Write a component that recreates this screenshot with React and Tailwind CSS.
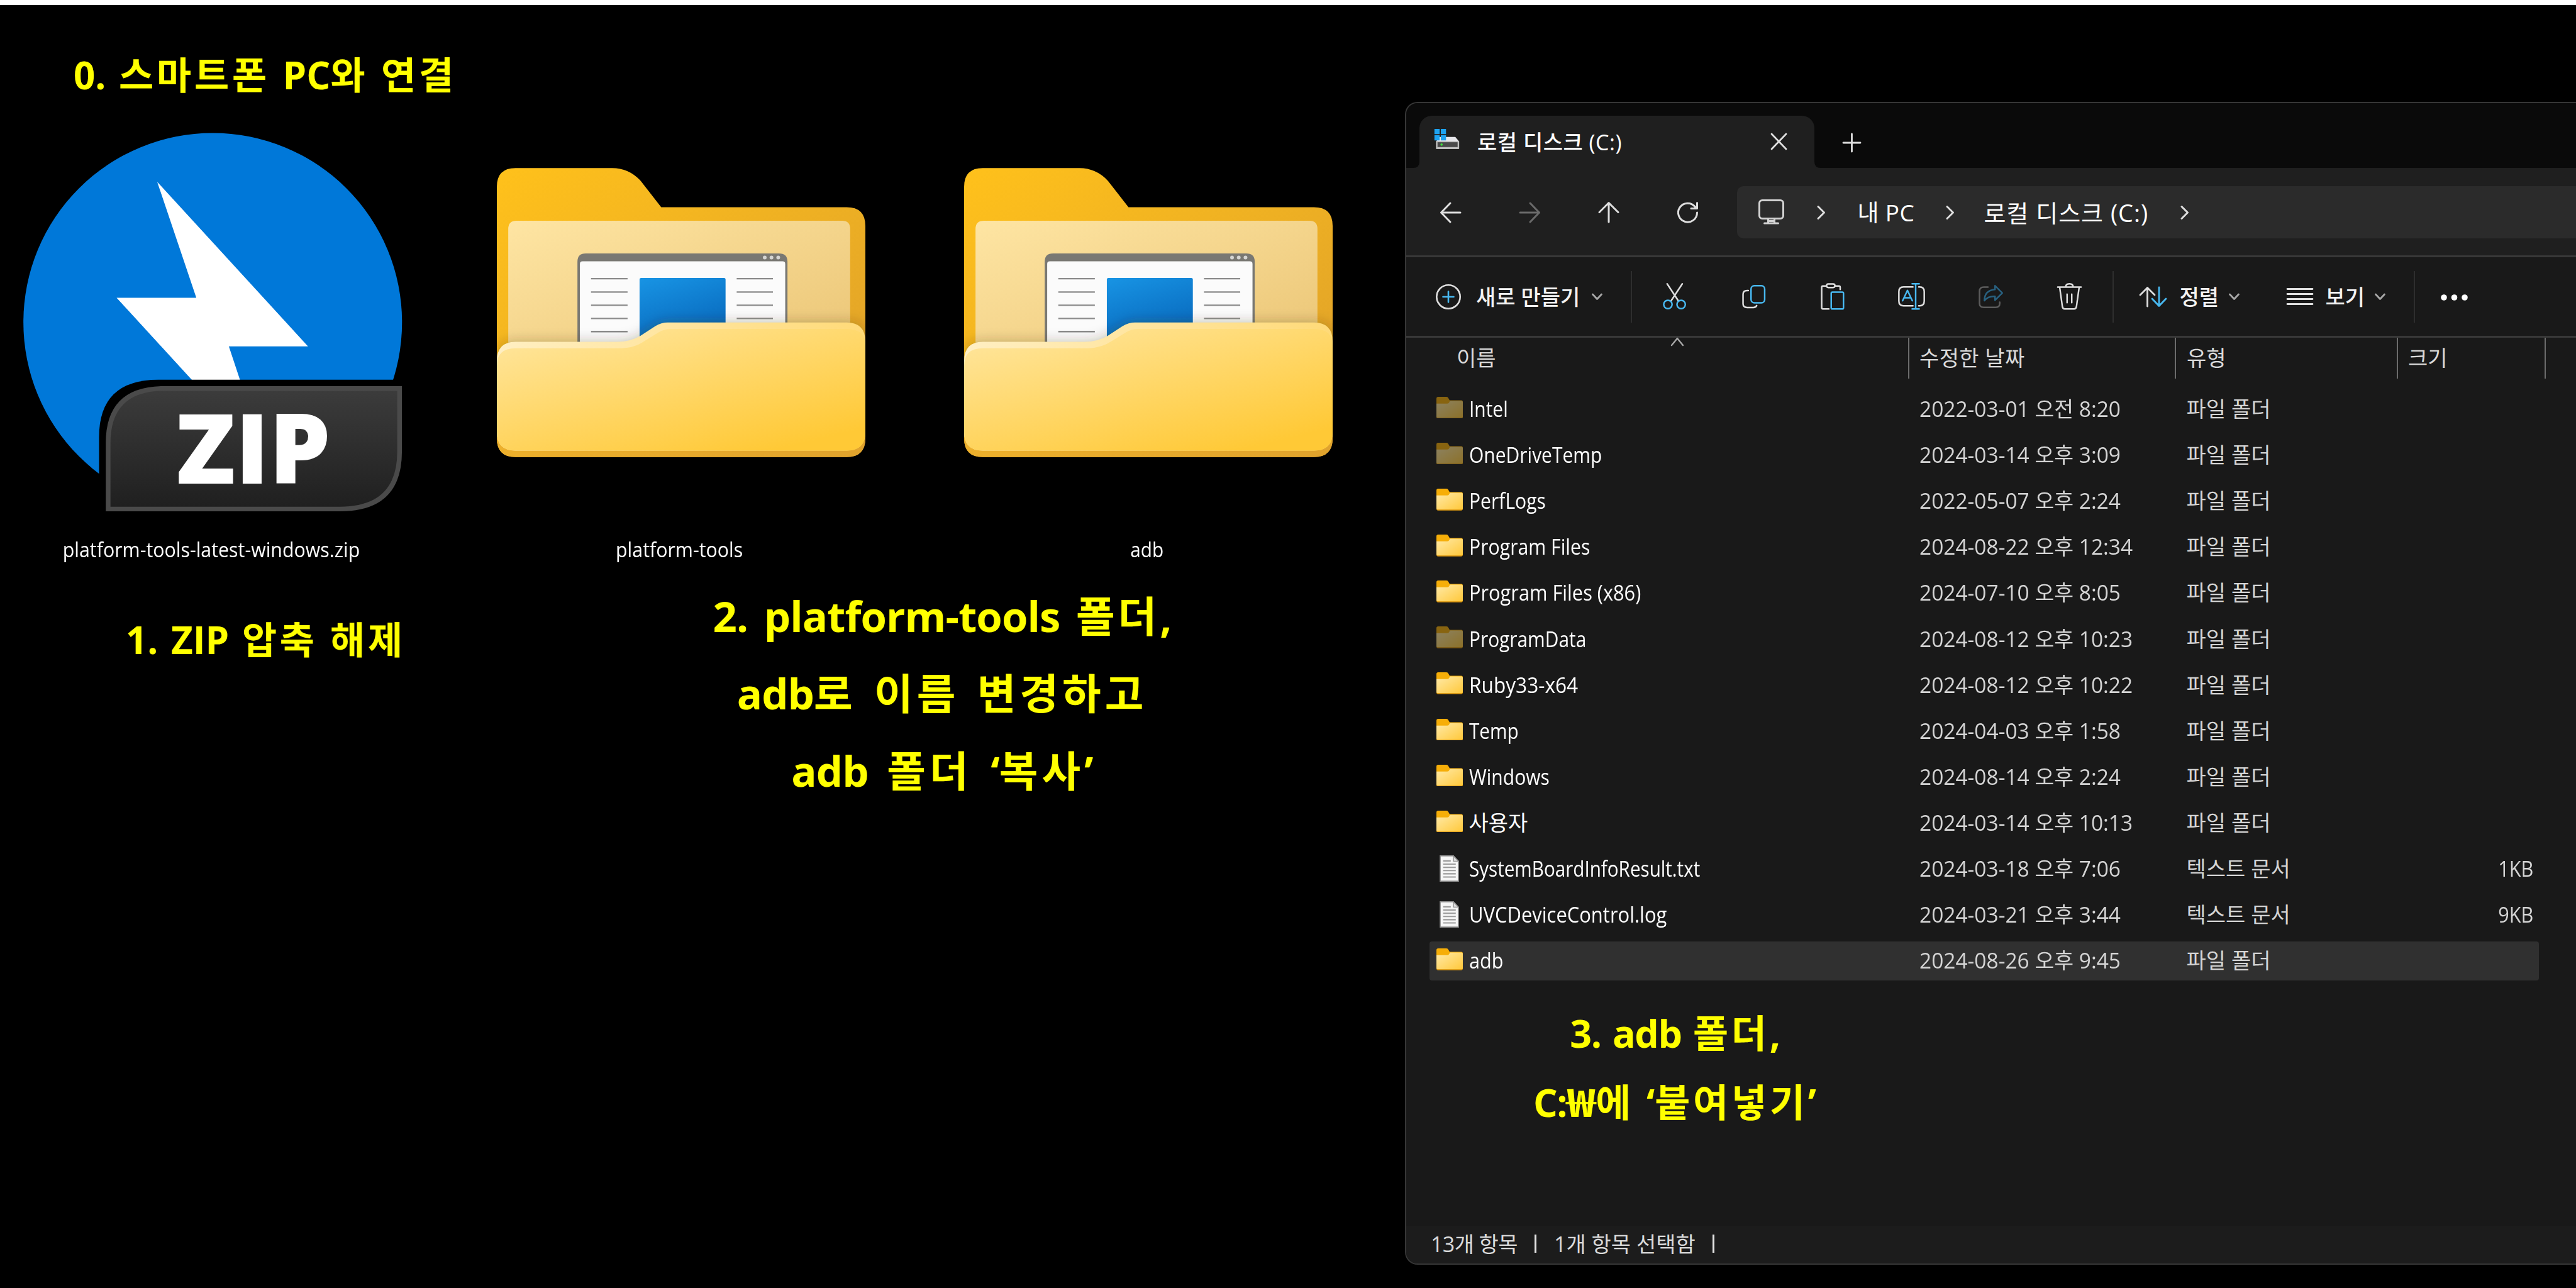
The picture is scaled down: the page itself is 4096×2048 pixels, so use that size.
const SANS = "font-['Open_Sans','Noto_Sans_CJK_KR',sans-serif]";

/* Splits text into Hangul and Latin runs so each script gets its own tracking. */
function Mixed({ text, ko, latin = "" }) {
  return text.split(/([\uAC00-\uD7A3]+)/).filter(Boolean).map((run, i) => (
    <span key={i} className={/[\uAC00-\uD7A3]/.test(run) ? ko : latin}>{run}</span>
  ));
}

function ZipIcon() {
  return (
    <svg viewBox="39 227 648 648" className="h-[603px] w-[603px]">
      <defs>
        <linearGradient id="badge" x1="0" y1="0" x2="0" y2="1">
          <stop offset="0" stopColor="#3c3c3c" />
          <stop offset="1" stopColor="#1f1f1f" />
        </linearGradient>
      </defs>
      <circle cx="362.7" cy="551" r="323.5" fill="#0078d9" />
      <path d="M267.9 311 525.5 592H390.3L456 790 198.5 509H334.7Z" fill="#fff" />
      <path d="M168.5 876V747Q168.5 649 270 649H700V876Z" fill="#000" />
      <path d="M184 870V757Q184 664 280 664H682V772Q682 870 580 870Z" fill="url(#badge)" stroke="#4a4a4a" strokeWidth="8" />
      <text x="300" y="826.5" fill="#fff" fontFamily="Open Sans" fontWeight="800" fontSize="166.5" textLength="264">ZIP</text>
    </svg>
  );
}

const FOLDER_BACK = "M0 32Q0 0 32 0H197Q226 0 246 22L281 67H598Q630 67 630 99V462Q630 494 598 494H32Q0 494 0 462Z";
const FOLDER_FRONT = "M0 330Q0 297 32 297H206Q228 297 245 287L271 270Q281 264 292 264H598Q630 264 630 297V451Q630 483 598 483H32Q0 483 0 451Z";

function BigFolder({ id }) {
  return (
    <svg viewBox="0 0 630 494" className="mt-[56px] h-[460px] w-[586px]">
      <defs>
        <linearGradient id={id + "back"} x1="0" y1="0" x2="1" y2="1">
          <stop offset="0" stopColor="#ffc11b" />
          <stop offset="1" stopColor="#dd9f2b" />
        </linearGradient>
        <linearGradient id={id + "paper"} x1="0" y1="0" x2="1" y2="1">
          <stop offset="0" stopColor="#fee5a3" />
          <stop offset="1" stopColor="#eac474" />
        </linearGradient>
        <linearGradient id={id + "blue"} x1="0" y1="0" x2="0.4" y2="1">
          <stop offset="0" stopColor="#1894e4" />
          <stop offset="1" stopColor="#0869bd" />
        </linearGradient>
        <linearGradient id={id + "front"} x1="0" y1="0" x2="0.75" y2="1">
          <stop offset="0" stopColor="#ffe7a2" />
          <stop offset="1" stopColor="#ffc936" />
        </linearGradient>
        <linearGradient id={id + "edge"} x1="0" y1="0" x2="1" y2="0">
          <stop offset="0" stopColor="#ffefc3" />
          <stop offset="1" stopColor="#ffda78" />
        </linearGradient>
        <linearGradient id={id + "lip"} x1="0" y1="0" x2="1" y2="0">
          <stop offset="0" stopColor="#edb02c" />
          <stop offset="1" stopColor="#e0a32d" />
        </linearGradient>
        <clipPath id={id + "clip"}><path d={FOLDER_BACK} /></clipPath>
        <filter id={id + "blur"} x="-10%" y="-20%" width="120%" height="140%"><feGaussianBlur stdDeviation="11" /></filter>
      </defs>
      <path d={FOLDER_BACK} fill={`url(#${id}back)`} />
      <path d="M19.5 104Q19.5 90 34 90H590Q604 90 604 104V330H19.5Z" fill={`url(#${id}paper)`} />
      <path d="M137.8 160Q137.8 146 152 146H482Q496.8 146 496.8 160V330H137.8Z" fill="#797873" />
      <path d="M142 164Q142 159.5 146.5 159.5H488.5Q493 159.5 493 164V330H142Z" fill="#fbfbfb" />
      <g fill="#d4d4d2">
        <circle cx="458" cy="153" r="3.2" />
        <circle cx="469.5" cy="153" r="3.2" />
        <circle cx="481" cy="153" r="3.2" />
      </g>
      <path d="M161 189H223.5M161 212H223.5M161 234.5H223.5M161 257H223.5M161 279.5H223.5M410 189H472M410 212H472M410 234.5H472M410 257H472" stroke="#8b8b8b" strokeWidth="2.5" />
      <rect x="244" y="188" width="147" height="110" rx="2.5" fill={`url(#${id}blue)`} />
      <g clipPath={`url(#${id}clip)`}>
        <path d={FOLDER_FRONT} fill="#3a2a10" fillOpacity="0.3" filter={`url(#${id}blur)`} />
      </g>
      <path d="M0 455H630V462Q630 494 598 494H32Q0 494 0 462Z" fill={`url(#${id}lip)`} />
      <path d={FOLDER_FRONT} fill={`url(#${id}edge)`} />
      <path d="M0 338Q0 308 32 308H213Q236 307 252 296L276 281Q286 275 297 275H598Q630 275 630 303V451Q630 483 598 483H32Q0 483 0 451Z" fill={`url(#${id}front)`} />
    </svg>
  );
}

function SmallFolder({ dim }) {
  return (
    <svg viewBox="0 0 45 37" className={dim ? "h-[34.5px] w-[42px] -translate-y-[2px] opacity-50" : "h-[34.5px] w-[42px] -translate-y-[2px]"}>
      <defs>
        <linearGradient id="sf" x1="0" y1="0" x2="1" y2="1">
          <stop offset="0" stopColor="#ffeaa8" />
          <stop offset="1" stopColor="#ffc83a" />
        </linearGradient>
      </defs>
      <path d="M0 3Q0 0 3 0H17Q19.5 0 20.5 2.5L22.5 6H42.5Q45 6 45 9V34Q45 37 42 37H3Q0 37 0 34Z" fill="#f6ae08" />
      <path d="M0 11.5H18.5Q21 11.5 22 9L23 7H42.5Q45 7 45 10V33Q45 36 42 36H3Q0 36 0 33Z" fill="url(#sf)" />
      <path d="M1 35.5Q2 36.3 4 36.3H41Q43 36.3 44 35.5" fill="none" stroke="#d89412" strokeWidth="1.2" />
    </svg>
  );
}

function FileIcon() {
  return (
    <svg viewBox="0 0 33 45" className="mx-[5.5px] h-[42px] w-[31px]">
      <path d="M1 1H23.5L32 10V44H1Z" fill="#f6f6f6" stroke="#8f8f8f" strokeWidth="1.8" />
      <path d="M23.5 1V10H32Z" fill="#dcdcdc" stroke="#8f8f8f" strokeWidth="1.5" />
      <path d="M6 9.5H19M6 15H27.5M6 20.5H27.5M6 26H27.5M6 31.5H27.5M6 37H27.5" stroke="#9c9c9c" strokeWidth="2.2" />
    </svg>
  );
}

function DriveIcon() {
  return (
    <svg viewBox="58 40 132 109" className="h-[33.5px] w-[41px]">
      <path d="M68 108 86 85H168L188 108Z" fill="#e6e6ea" />
      <rect x="68" y="106" width="120" height="41" rx="3" fill="#bdbdbd" />
      <rect x="76" y="112" width="104" height="25" fill="#4a4a4a" />
      <circle cx="97" cy="124" r="6" fill="#3ee03e" />
      <path d="M60 43H87V70H60ZM93 43H120V70H93ZM60 76H87V103H60ZM93 76H120V103H93Z" fill="#1da3f2" />
    </svg>
  );
}

function Icon({ box, className, d, stroke = "#dedede", w = 8, children }) {
  return (
    <svg viewBox={box} className={"shrink-0 overflow-visible " + className} fill="none" stroke={stroke} strokeWidth={w} strokeLinecap="round" strokeLinejoin="round">
      {d && <path d={d} />}
      {children}
    </svg>
  );
}

const BLUE = "#48b8f0";
const ChevronDown = () => <Icon box="0 0 17 10" w={2.8} stroke="#a8a8a8" className="h-[10px] w-[17px]" d="M1.5 1 8.5 8.5 15.5 1" />;
const ChevronRight = ({ className = "" }) => <Icon box="0 0 14 22" w={3} className={"h-[22px] w-[14px] " + className} d="M2 1.5 11.5 11 2 20.5" />;
const Divider = () => <div className="h-[82px] w-[2px] shrink-0 bg-[#2e2e2e]" />;
const Cell = ({ children }) => <div className="flex w-[125.6px] shrink-0 justify-center">{children}</div>;

function TabBar() {
  return (
    <div className="flex h-[103px] shrink-0 bg-[#0a0a0a] pl-[21px] pt-[20px]">
      <div className="relative flex w-[628px] items-center rounded-t-[20px] bg-[#1f1f1f] pl-[23px] pr-[44px]">
        <svg viewBox="0 0 10 10" className="absolute -left-[10px] bottom-0 h-[10px] w-[10px]"><path d="M10 0V10H0Q10 10 10 0Z" fill="#1f1f1f" /></svg>
        <svg viewBox="0 0 10 10" className="absolute -right-[10px] bottom-0 h-[10px] w-[10px]"><path d="M0 0V10H10Q0 10 0 0Z" fill="#1f1f1f" /></svg>
        <div className="-translate-y-[5px]"><DriveIcon /></div>
        <span className="ml-[28px] grow whitespace-pre text-[34px] font-medium leading-none tracking-[0.5px] text-white">로컬 디스크 (C:)</span>
        <Icon box="0 0 25 26" w={2.8} className="h-[26px] w-[25px] -translate-y-[1px]" d="M1 1 24 25M24 1 1 25" />
      </div>
      <Icon box="0 0 27 28" w={2.8} className="ml-[46px] mt-[29px] h-[28px] w-[27px]" d="M13.5 0V28M0 14H27" />
    </div>
  );
}

function NavBar() {
  return (
    <div className="flex h-[142px] shrink-0 items-center border-b-[3px] border-[#383838] bg-[#1f1f1f] pl-[8px] pt-[2px]">
      <Cell><Icon box="0 0 33 32" w={3} className="h-[32px] w-[33px]" d="M32 16H1.5M16 1 1.5 16 16 31" /></Cell>
      <Cell><Icon box="0 0 33 32" w={3} stroke="#6a6a6a" className="h-[32px] w-[33px]" d="M1 16H31.5M17 1 31.5 16 17 31" /></Cell>
      <Cell><Icon box="0 0 32 33" w={3} className="h-[33px] w-[32px]" d="M16 32V1.5M1 16.5 16 1.5 31 16.5" /></Cell>
      <Cell><Icon box="0 0 33 33" w={3} className="h-[33px] w-[33px]" d="M31.5 17A15 15 0 1 1 28 7.500L31.5 10.5M31.5 1.5V10.5H22" /></Cell>
      <div className="ml-[16px] flex h-[83px] grow items-center rounded-l-[10px] bg-[#2b2b2b] pl-[34px] text-[37px] leading-none text-white">
        <Icon box="0 0 41 40" w={3} stroke="#d2d2d2" className="h-[40px] w-[41px] -translate-y-[1px]">
          <rect x="1.5" y="1.5" width="38" height="29" rx="4.5" />
          <path d="M15.5 31V37M25.5 31V37M9.5 38H31.5M16 34.5H25" />
        </Icon>
        <ChevronRight className="ml-[52px]" />
        <span className="ml-[50px] w-[141px] shrink-0 whitespace-pre tracking-[0.4px]">내 PC</span>
        <ChevronRight />
        <span className="ml-[46px] w-[313px] shrink-0 whitespace-pre text-[38px] tracking-[1px]">로컬 디스크 (C:)</span>
        <ChevronRight />
      </div>
    </div>
  );
}

function CommandBar() {
  return (
    <div className="flex h-[128px] shrink-0 items-center border-b-[3px] border-[#383838] text-[34px] font-medium leading-none text-[#f2f2f2]">
      <div className="flex w-[357px] shrink-0 items-center pl-[47px]">
        <Icon box="0 0 40 40" w={2.6} className="h-[40px] w-[40px]">
          <circle cx="20" cy="20" r="18.7" />
          <path d="M20 11.5V28.5M11.5 20H28.5" stroke={BLUE} />
        </Icon>
        <span className="ml-[24px] w-[184px] whitespace-pre">새로 만들기</span>
        <ChevronDown />
      </div>
      <Divider />
      <div className="flex items-center pl-[5px] pr-[5px]">
        <Cell>
          <Icon box="0 0 120 137" className="h-[42.5px] w-[37.2px]" d="M22 4 80 92M100 4 42 92">
            <g stroke={BLUE}><circle cx="26" cy="110" r="21.5" /><circle cx="94" cy="110" r="21.5" /></g>
          </Icon>
        </Cell>
        <Cell>
          <Icon box="0 0 120 120" className="h-[37.2px] w-[37.2px]" d="M32 29H26Q5 29 5 49V97Q5 116 26 116H58Q70 116 75 106">
            <rect x="46" y="4" width="70" height="88" rx="17" stroke={BLUE} />
          </Icon>
        </Cell>
        <Cell>
          <Icon box="0 0 120 137" className="h-[42.5px] w-[37.2px]" d="M28 15H12Q5 15 5 22V126Q5 133 12 133H42M74 15H93Q100 15 100 22V33">
            <rect x="30" y="5" width="43" height="18" rx="9" />
            <rect x="54" y="47" width="63" height="86" rx="6" stroke={BLUE} />
          </Icon>
        </Cell>
        <Cell>
          <Icon box="0 0 138 137" className="h-[42.5px] w-[43px]" d="M76 20H28Q4 20 4 44V93Q4 117 28 117H76M106 20H110Q134 20 134 44V93Q134 117 110 117H106">
            <path d="M72 4H108M90 4V133M72 133H108M23 91 48 38 73 91M32 76H64" stroke={BLUE} />
          </Icon>
        </Cell>
        <Cell>
          <Icon box="0 0 125 118" stroke="#5c5c5c" className="h-[37px] w-[39px]" d="M48 11H27Q5 11 5 32V94Q5 114 27 114H86Q108 114 108 94V88">
            <path d="M84 4 121 41 84 78V58Q48 56 30 80Q30 28 84 23Z" stroke="#28607f" />
          </Icon>
        </Cell>
        <Cell>
          <Icon box="0 0 126 137" className="h-[42.5px] w-[39px]" d="M3 21H123M44 20Q44 4 63 4Q82 4 82 20M13 22 27 122Q29 133 39 133H87Q97 133 99 122L113 22M51 57V101M75 57V101" />
        </Cell>
      </div>
      <Divider />
      <div className="flex w-[477px] shrink-0 items-center pl-[41px]">
        <Icon box="0 0 43 32" w={2.8} className="h-[32px] w-[43px]" d="M12.5 31V1.5M1 13 12.5 1.5 24 13">
          <path d="M31 1V30.5M20 19 31 30.5 42 19" stroke={BLUE} />
        </Icon>
        <span className="ml-[21px] w-[78px] shrink-0">정렬</span>
        <ChevronDown />
        <Icon box="0 0 42 27" w={2.8} className="ml-[75px] h-[27px] w-[42px]" d="M1 1.5H41M1 9.5H41M1 17.5H41M1 25.5H41" />
        <span className="ml-[20px] w-[78px] shrink-0">보기</span>
        <ChevronDown />
      </div>
      <Divider />
      <svg viewBox="0 0 43 10" className="ml-[41px] h-[10px] w-[43px] translate-y-[1px] fill-white"><circle cx="5" cy="5" r="4.8" /><circle cx="21.5" cy="5" r="4.8" /><circle cx="38" cy="5" r="4.8" /></svg>
    </div>
  );
}

const HEADERS = [
  ["이름", "w-[800px] pl-[80px]"],
  ["수정한 날짜", "w-[424px] pl-[16px] tracking-[0.4px]"],
  ["유형", "w-[353px] pl-[17px]"],
  ["크기", "w-[235px] pl-[16px]"],
];

const ROWS = [
  ["dim", "Intel", "scale-x-[0.88]", "2022-03-01 오전 8:20"],
  ["dim", "OneDriveTemp", "scale-x-[0.882]", "2024-03-14 오후 3:09"],
  ["folder", "PerfLogs", "scale-x-[0.885]", "2022-05-07 오후 2:24"],
  ["folder", "Program Files", "scale-x-[0.889]", "2024-08-22 오후 12:34"],
  ["folder", "Program Files (x86)", "scale-x-[0.905]", "2024-07-10 오후 8:05"],
  ["dim", "ProgramData", "scale-x-[0.878]", "2024-08-12 오후 10:23"],
  ["folder", "Ruby33-x64", "scale-x-[0.93]", "2024-08-12 오후 10:22"],
  ["folder", "Temp", "scale-x-[0.874]", "2024-04-03 오후 1:58"],
  ["folder", "Windows", "scale-x-[0.884]", "2024-08-14 오후 2:24"],
  ["folder", "사용자", "scale-x-100", "2024-03-14 오후 10:13"],
  ["file", "SystemBoardInfoResult.txt", "scale-x-[0.871]", "2024-03-18 오후 7:06", "1KB"],
  ["file", "UVCDeviceControl.log", "scale-x-[0.91]", "2024-03-21 오후 3:44", "9KB"],
  ["folder", "adb", "scale-x-[0.9]", "2024-08-26 오후 9:45"],
];

function FileList() {
  return (
    <>
      <div className="relative flex h-[65px] shrink-0 text-[34px] leading-none text-[#dadada]">
        {HEADERS.map(([t, c]) => (
          <div key={t} className={"flex shrink-0 items-center whitespace-pre border-r-[2px] border-[#6c6c6c] pb-[1px] " + c}>{t}</div>
        ))}
        <Icon box="0 0 20 13" w={2.4} stroke="#a8a8a8" className="absolute left-[421px] top-0 h-[13px] w-[20px]" d="M1 12 10 1 19 12" />
      </div>
      <div className="mt-[12px] flex shrink-0 flex-col text-[34px] leading-none text-[#d4d4d4]">
        {ROWS.map(([kind, name, sx, date, size]) => (
          <div key={name} className="flex h-[73.12px] items-center pl-[37px]">
            <div className={"flex h-[62px] w-[1764px] items-center rounded-[4px] pb-[1px] pl-[10.5px] pr-[9px] " + (name === "adb" ? "bg-[#303030]" : "")}>
              <div className="w-[42px] shrink-0">{kind === "file" ? <FileIcon /> : <SmallFolder dim={kind === "dim"} />}</div>
              <div className="ml-[10px] w-[716px] shrink-0 whitespace-pre text-white"><span className={"inline-block origin-left " + sx}>{name}</span></div>
              <div className="w-[425px] shrink-0 whitespace-pre"><span className="inline-block origin-left scale-x-[0.985]">{date}</span></div>
              <div className="grow whitespace-pre">{kind === "file" ? "텍스트 문서" : "파일 폴더"}</div>
              <div className="origin-right scale-x-[0.9]">{size}</div>
            </div>
          </div>
        ))}
      </div>
    </>
  );
}

function ExplorerWindow() {
  return (
    <div className="mt-[154px] flex h-[1849px] grow flex-col overflow-hidden rounded-l-[20px] border-2 border-r-0 border-[#363636] bg-[#191919]">
      <TabBar />
      <NavBar />
      <CommandBar />
      <FileList />
      <div className="mt-[25px] w-[854px] text-center text-[61px] font-bold leading-[107px] text-[#ffff00] [word-spacing:4px]">
        <div><Mixed text="3. adb 폴더," ko="tracking-[4.800px]" latin="tracking-[-1.5px]" /></div>
        <div><span className="tracking-[-1.5px]">C:</span><span className="mx-[5px] inline-block scale-x-[1.28] font-['Noto_Sans_CJK_KR']">₩</span><Mixed text="에 ‘붙여넣기’" ko="tracking-[4.800px]" /></div>
      </div>
      <div className="grow" />
      <div className="flex h-[60px] shrink-0 items-center bg-[#1c1c1c] pb-[3px] pl-[39px] text-[34px] leading-none text-[#dadada]">
        <span className="w-[165px] whitespace-pre tracking-[-0.6px]">13개 항목</span>
        <div className="h-[29px] w-[3px] bg-[#e4e4e4]" />
        <span className="ml-[28px] w-[252px] whitespace-pre">1개 항목 선택함</span>
        <div className="h-[29px] w-[3px] bg-[#e4e4e4]" />
      </div>
    </div>
  );
}

function Figure({ label, sx, className, children }) {
  return (
    <div className={"flex flex-col items-center " + className}>
      <div className="h-[602px]">{children}</div>
      <div className={"mt-[38px] whitespace-nowrap text-[33px] leading-[45px] text-white " + sx}>{label}</div>
    </div>
  );
}

export default function App() {
  return (
    <div className={"flex h-[2048px] w-[4096px] flex-col overflow-hidden bg-black " + SANS}>
      <div className="h-[8px] shrink-0 bg-white" />
      <div className="flex grow">
        <div className="w-[2234px] shrink-0 font-bold text-[#ffff00]">
          <h1 className="whitespace-pre pl-[117px] pt-[71px] text-[60px] leading-[80px] [word-spacing:5px]"><Mixed text="0. 스마트폰 PC와 연결" ko="tracking-[4.800px]" /></h1>
          <div className="mt-[52px] flex pl-[37px] font-normal">
            <Figure label="platform-tools-latest-windows.zip" sx="scale-x-[0.92] pr-[5px]" className="w-[603px]"><ZipIcon /></Figure>
            <Figure label="platform-tools" sx="scale-x-[0.92] pr-[6px]" className="ml-[150px] w-[586px]"><BigFolder id="a" /></Figure>
            <Figure label="adb" sx="scale-x-[0.9] pr-[6px]" className="ml-[157px] w-[586px]"><BigFolder id="b" /></Figure>
          </div>
          <div className="flex">
            <p className="ml-[200px] mt-[81px] w-[800px] whitespace-pre text-[60px] leading-[80px] [word-spacing:5px]"><Mixed text="1. ZIP 압축 해제" ko="tracking-[4.600px]" /></p>
            <div className="mt-[22px] w-[996px] whitespace-pre text-center text-[67px] leading-[122.9px] [word-spacing:9px]">
              <div><Mixed text="2. platform-tools 폴더," ko="tracking-[5px]" latin="tracking-[-0.9px]" /></div>
              <div className="[word-spacing:12px]"><Mixed text="adb로 이름 변경하고" ko="tracking-[6px]" latin="tracking-[-1px]" /></div>
              <div className="[word-spacing:13px]"><Mixed text="adb 폴더 ‘복사’" ko="tracking-[6px]" latin="tracking-[-0.9px]" /></div>
            </div>
          </div>
        </div>
        <ExplorerWindow />
      </div>
    </div>
  );
}
